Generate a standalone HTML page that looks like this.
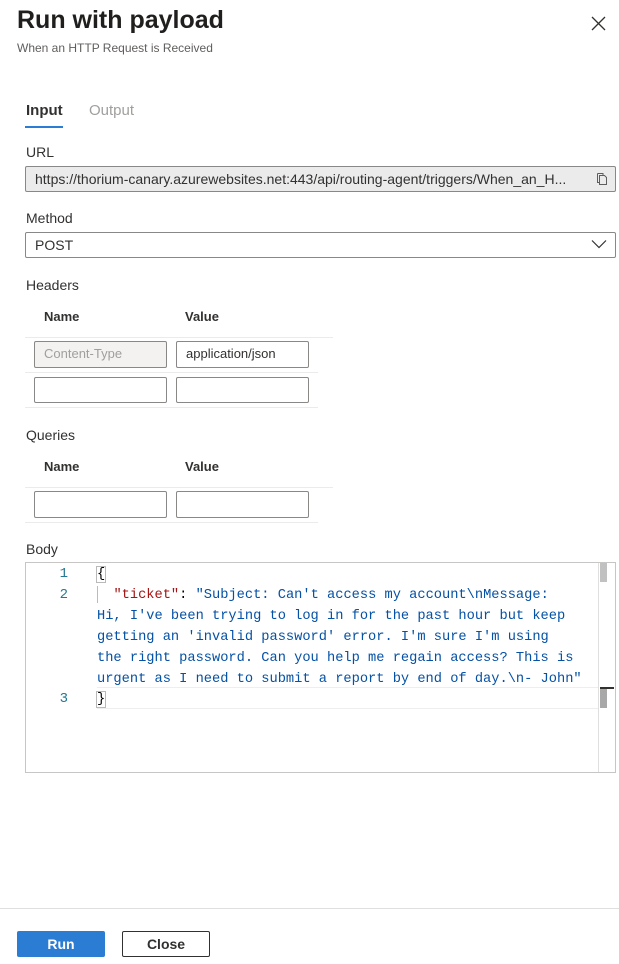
<!DOCTYPE html>
<html><head><meta charset="utf-8"><style>
*{box-sizing:border-box;margin:0;padding:0}
body{width:619px;height:964px;background:#fff;font-family:"Segoe UI","Liberation Sans",sans-serif;color:#323130;position:relative;overflow:hidden}
.a{position:absolute;white-space:nowrap}
.lbl{font-size:14px;color:#323130}
.inp{position:absolute;border:1px solid #8a8886;border-radius:2px;background:#fff;font-size:14px;padding-left:9px;line-height:24px}
.th{font-size:13px;font-weight:bold;color:#323130}
.hl{position:absolute;height:1px;background:#edebe9}
.code{font-family:"Liberation Mono",monospace;font-size:13.7px;color:#0451a5;line-height:21px}
.ln{position:absolute;left:25px;width:43px;text-align:right;font-family:"Liberation Mono",monospace;font-size:14px;color:#237893;line-height:21px}
</style></head><body>
<div class="a" style="left:17px;top:6px;font-size:25px;font-weight:bold;color:#201f1e">Run with payload</div>
<div class="a" style="left:17px;top:41px;font-size:12px;color:#605e5c">When an HTTP Request is Received</div>
<svg class="a" style="left:591px;top:16px" width="15" height="15" viewBox="0 0 15 15"><path d="M1 1L14 14M14 1L1 14" stroke="#323130" stroke-width="1.3"/></svg>

<div class="a" style="left:26px;top:102px;font-size:15px;font-weight:bold;color:#323130">Input</div>
<div class="a" style="left:25px;top:126px;width:38px;height:2px;background:#2b7cd3"></div>
<div class="a" style="left:89px;top:102px;font-size:15px;color:#a19f9d">Output</div>

<div class="a lbl" style="left:26px;top:144px">URL</div>
<div class="inp" style="left:25px;top:166px;width:591px;height:26px;background:#ebebeb;color:#323130">https://thorium-canary.azurewebsites.net:443/api/routing-agent/triggers/When_an_H...</div>
<svg class="a" style="left:596px;top:172px" width="12" height="14" viewBox="0 0 12 14"><path d="M3.5 3.5V12.5H10.5V5.5L8.5 3.5Z M1.5 1.5H7V3.5M1.5 1.5V10.5H3.5" fill="none" stroke="#605e5c"/></svg>

<div class="a lbl" style="left:26px;top:210px">Method</div>
<div class="inp" style="left:25px;top:232px;width:591px;height:26px">POST</div>
<svg class="a" style="left:591px;top:239px" width="16" height="10" viewBox="0 0 16 10"><path d="M1 1.5L8 8.5L15 1.5" fill="none" stroke="#323130" stroke-width="1.2"/></svg>

<div class="a lbl" style="left:26px;top:277px">Headers</div>
<div class="a th" style="left:44px;top:309px">Name</div>
<div class="a th" style="left:185px;top:309px">Value</div>
<div class="hl" style="left:25px;top:337px;width:308px"></div>
<div class="inp" style="left:34px;top:341px;width:133px;height:27px;background:#f3f2f1;color:#a19f9d;font-size:13px">Content-Type</div>
<div class="inp" style="left:176px;top:341px;width:133px;height:27px;font-size:13px">application/json</div>
<div class="hl" style="left:25px;top:372px;width:293px"></div>
<div class="inp" style="left:34px;top:377px;width:133px;height:26px"></div>
<div class="inp" style="left:176px;top:377px;width:133px;height:26px"></div>
<div class="hl" style="left:25px;top:407px;width:293px"></div>

<div class="a lbl" style="left:26px;top:427px">Queries</div>
<div class="a th" style="left:44px;top:459px">Name</div>
<div class="a th" style="left:185px;top:459px">Value</div>
<div class="hl" style="left:25px;top:487px;width:308px"></div>
<div class="inp" style="left:34px;top:491px;width:133px;height:27px"></div>
<div class="inp" style="left:176px;top:491px;width:133px;height:27px"></div>
<div class="hl" style="left:25px;top:522px;width:293px"></div>

<div class="a lbl" style="left:26px;top:541px">Body</div>
<div class="a" style="left:25px;top:562px;width:591px;height:211px;border:1px solid #c8c6c4"></div>
<div class="a" style="left:598px;top:563px;width:1px;height:209px;background:#e1dfdd"></div>
<div class="a" style="left:600px;top:563px;width:7px;height:19px;background:#c1c1c1"></div>
<div class="a" style="left:600px;top:689px;width:7px;height:19px;background:#a8a8a8"></div>
<div class="a" style="left:600px;top:687px;width:14px;height:2px;background:#323130"></div>
<div class="a" style="left:97px;top:687px;width:501px;height:22px;border-top:1px solid #eeeeee;border-bottom:1px solid #eeeeee"></div>
<div class="ln" style="top:564px">1</div>
<div class="ln" style="top:585px">2</div>
<div class="ln" style="top:689px">3</div>
<div class="a" style="left:97px;top:586px;width:1px;height:17px;background:#bbb"></div>
<div class="a code" style="left:97px;top:564px"><span style="color:#000;outline:1px solid #b9b9b9">{</span></div>
<div class="a code" style="left:97px;top:585px">&nbsp; <span style="color:#a31515">"ticket"</span><span style="color:#000">:</span> "Subject: Can't access my account\nMessage:<br>Hi, I've been trying to log in for the past hour but keep<br>getting an 'invalid password' error. I'm sure I'm using<br>the right password. Can you help me regain access? This is<br>urgent as I need to submit a report by end of day.\n- John"</div>
<div class="a code" style="left:97px;top:689px"><span style="color:#000;outline:1px solid #b9b9b9">}</span></div>

<div class="a" style="left:0;top:908px;width:619px;height:1px;background:#e1dfdd"></div>
<div class="a" style="left:17px;top:931px;width:88px;height:26px;background:#2b7cd3;border-radius:2px;color:#fff;font-size:14px;font-weight:bold;text-align:center;line-height:26px">Run</div>
<div class="a" style="left:122px;top:931px;width:88px;height:26px;border:1px solid #323130;border-radius:2px;font-size:14px;font-weight:bold;text-align:center;line-height:24px">Close</div>
</body></html>
